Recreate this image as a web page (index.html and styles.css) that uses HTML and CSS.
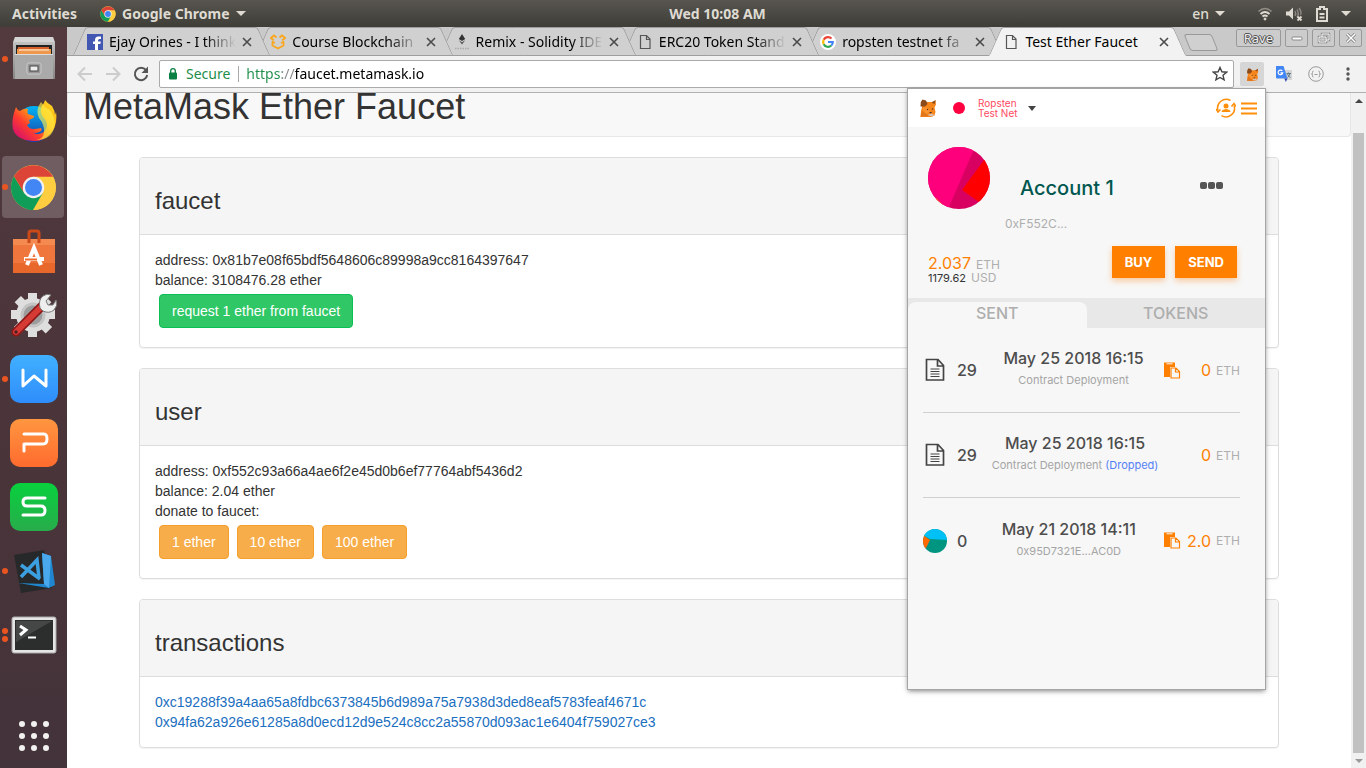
FILE: index.html
```html
<!DOCTYPE html>
<html lang="en">
<head>
<meta charset="utf-8">
<title>Test Ether Faucet</title>
<link rel="stylesheet" href="styles.css">
</head>
<body>
<svg class="defs" width="0" height="0" aria-hidden="true">
  <symbol id="chrome" viewBox="0 0 48 48">
    <circle cx="24" cy="24" r="23" fill="#fc4"/>
    <path d="M24 13H43.900A23 23 0 0 1 24 47L33.500 29.500Z" fill="#ffcd40"/>
    <path d="M4.100 12.500A23 23 0 0 0 23.500 47L33.500 29.500 14.500 29.500Z" fill="#0f9d58"/>
    <path d="M4.100 12.500A23 23 0 0 1 43.900 13H24L14.500 29.500Z" fill="#db4437"/>
    <circle cx="24" cy="24" r="11" fill="#f1f1f1"/><circle cx="24" cy="24" r="8.700" fill="#4285f4"/>
  </symbol>
  <symbol id="page" viewBox="0 0 16 16"><path d="M3.500 1.500h6l3.500 3.500v9.500h-9.500zM9.500 1.500v4h3.500" fill="none" stroke="#555" stroke-width="1.200"/></symbol>
  <symbol id="close" viewBox="0 0 10 10"><path d="M1 1l8 8M9 1l-8 8" stroke="#4a4a4a" stroke-width="1.600"/></symbol>
  <symbol id="fox" viewBox="0 0 18 18">
    <path d="M2 4 4 1l4 2h5l3.500-1.500.5 4-1.500 3 1 4.500-1 3.500-3 1.500H1.500L2 12 3 8z" fill="#f6851b"/>
    <path d="M3.500.5 7 1.500 8.500 5 6 7.500 1.500 7.500 1.800 3zM16.800 1 12.500 3.500l3 1.500z" fill="#8a4a1c"/>
    <path d="M1.500 17.500 3 12l4.500 3 2.500 2.500z" fill="#e2761b"/><path d="M3 9l4 6 4-2.500-3-4z" fill="#fb9431"/><path d="M8.500 16l4-1.500 3 1.500-3 1.500z" fill="#d7c1b3"/>
    <circle cx="8.500" cy="10.500" r=".7" fill="#4a3020"/><circle cx="13.500" cy="10" r=".7" fill="#4a3020"/><path d="M10 13h3l-1 1.500z" fill="#4a3020"/>
  </symbol>
  <symbol id="doc" viewBox="0 0 20 24"><path d="M1.500 1.500h11.500l5.500 6v14.500h-17zM12.500 1.500v6.500h6" fill="none" stroke="#444" stroke-width="1.700"/><path d="M5.500 11h9M5.500 13.500h9M5.500 16h9M5.500 18.500h9" stroke="#444" stroke-width="1.200"/></symbol>
  <symbol id="copy" viewBox="0 0 17 17"><path d="M0 .5h11v4.500H6v10H0z" fill="#ff8000"/><path d="M2.500 1.800h6" stroke="#f7f7f7" stroke-width="1"/><path d="M7 6h5l3.500 3.500v6.500H7zM11.500 6v4h4" fill="#f7f7f7" stroke="#ff8000" stroke-width="1.200"/></symbol>
</svg>

<header class="topbar">
  <nav class="topbar-left">
    <button class="bar-btn">Activities</button>
    <button class="bar-btn app-menu"><svg width="16" height="16"><use href="#chrome"/></svg>Google Chrome<i class="caret"></i></button>
  </nav>
  <button class="bar-btn clock">Wed 10:08 AM</button>
  <div class="topbar-right">
    <button class="bar-btn lang">en<i class="caret"></i></button>
    <button class="bar-btn status" aria-label="System">
      <svg width="16" height="16" viewBox="0 0 16 16" fill="none" stroke="#dfdbd2"><path d="M1.500 5.500Q8-.5 14.500 5.500" stroke="#918e87" stroke-width="1.500"/><path d="M3.500 8Q8 4 12.500 8M5.500 10.500Q8 8.500 10.500 10.500" stroke-width="1.800"/><circle cx="8" cy="13" r="1" fill="#dfdbd2"/></svg>
      <svg width="18" height="16" viewBox="0 0 18 16" fill="none"><path d="M1 5.500h3l4-4v12l-4-4h-3z" fill="#dfdbd2"/><path d="M10 5q1.500 2.500 0 5M12 3.500q2.500 4 0 8M14 2q3 4 1.500 7" stroke="#8d8a83" stroke-width="1.400"/><path d="M12.500 10.500l4 4M16.500 10.500l-4 4" stroke="#dfdbd2" stroke-width="1.800"/></svg>
      <svg width="14" height="18" viewBox="0 0 14 18" fill="none" stroke="#dfdbd2"><path d="M2 4h3V2h4v2h3v12H2z" stroke-width="2"/><path d="M4.500 9h5M4.500 12.500h5" stroke-width="1.800"/></svg>
      <i class="caret"></i>
    </button>
  </div>
</header>

<div class="desktop">
  <aside class="dock">
    <button class="app on" aria-label="Files"><svg width="44" height="46" viewBox="0 0 44 46">
      <defs><linearGradient id="gf" x2="0" y2="1"><stop stop-color="#c9c9c9"/><stop offset="1" stop-color="#858585"/></linearGradient></defs>
      <path d="M3 1h38l2 5v37H1V6z" fill="url(#gf)"/><path d="M3 1h38l1 5H2z" fill="#d5d5d5"/><path d="M4 9h36v9H4z" fill="#222"/><path d="M6 11h31v6H5z" fill="#d8602a"/><path d="M5 13h34v5H5z" fill="#f0974e"/><path d="M7 14h30" stroke="#fff0d8"/><path d="M3 18h38v25H3z" fill="#aaa"/><path d="M3 18.500h38" stroke="#ddd"/><rect x="15" y="27" width="14" height="11" rx="2" fill="#999" stroke="#ccc"/><rect x="18" y="30" width="8" height="5" fill="#eee" stroke="#444"/></svg></button>
    <button class="app" aria-label="Firefox"><svg width="46" height="46" viewBox="0 -3 46 46">
      <defs><linearGradient id="ff" x1="1" y1="0" x2="0" y2="1"><stop stop-color="#ffe226"/><stop offset=".4" stop-color="#ffa813"/><stop offset=".65" stop-color="#ff3c2e"/><stop offset="1" stop-color="#c60084"/></linearGradient><linearGradient id="fb" x2="0" y2="1"><stop stop-color="#00b3f4"/><stop offset="1" stop-color="#1b3ba8"/></linearGradient></defs>
      <circle cx="23" cy="21" r="18" fill="url(#fb)"/>
      <path d="M5 4q1 3 4 4 4-3 8-2-1 3 0 5l6 2q1 2-5 4l1 3-3 2q2 4 6 4t8-1q2 3-2 4-4 2-7 0 7 5 13-1 5-7-2-14-5-8 1-14l1-3q2 3 7 6 3 5 3 9l1-3q2 14-6 22-8 8-17 7Q5 37 2 26 0 17 5 4z" fill="url(#ff)"/><path d="M30-1q-6 8-2 16 6 7 5 15-1 6-8 7 17 0 19-16Q43 8 34 4z" fill="#fff044" opacity=".65"/></svg></button>
    <button class="app on active" aria-label="Chrome"><svg width="47" height="47"><use href="#chrome"/></svg></button>
    <button class="app" aria-label="Software"><svg width="42" height="44" viewBox="0 0 42 44">
      <rect y="10" width="42" height="34" fill="#ef763c"/><path d="M0 10h42v6H0z" fill="#f58a50"/><path d="M0 34h42v10H0z" fill="#e8672b"/><path d="M16 14V4q0-2 2-2h6q2 0 2 2v10" fill="none" stroke="#c94918" stroke-width="3"/><path d="M14 36l7-17 7 17M11 30h20" fill="none" stroke="#fff" stroke-width="4"/><path d="M12 30.500h12" stroke="#ef6a2c" stroke-width="2"/></svg></button>
    <button class="app" aria-label="Settings"><svg width="46" height="46" viewBox="0 0 46 46">
      <g fill="#dedede"><circle cx="22" cy="23" r="17"/><path d="M17 1h9v44h-9zM0 18h44v9H0z"/><path d="M17 1h9v44h-9zM0 18h44v9H0z" transform="rotate(45 22 23)"/></g><circle cx="22" cy="23" r="11" fill="#9c9c9c" stroke="#c4c4c4" stroke-width="3"/><path d="M5 40 31 14" stroke="#8d1717" stroke-width="9" stroke-linecap="round"/><path d="M5 40 30 15" stroke="#d63a34" stroke-width="6" stroke-linecap="round"/><circle cx="5" cy="40" r="1.700" fill="#4d2020"/><path d="M29 16q-2-8 3-12 4-3 8-1l-5 6 2 4 5 0 3-5q2 6-2 10-5 4-11 1z" fill="#eee" stroke="#777"/></svg></button>
    <button class="app on" aria-label="Writer"><svg class="tile blue" viewBox="0 0 48 48"><path d="M13 15v16L24 21l12 10V15" /></svg></button>
    <button class="app" aria-label="Presentation"><svg class="tile orange" viewBox="0 0 48 48"><path d="M14 15h20q3 0 3 5t-4 5H14v7"/></svg></button>
    <button class="app" aria-label="Spreadsheets"><svg class="tile green" viewBox="0 0 48 48"><path d="M35 15H17q-4 0-4 4t4 4h14q4 0 4 4.500t-4 4.500H13"/></svg></button>
    <button class="app on" aria-label="Visual Studio Code"><svg width="42" height="44" viewBox="0 0 42 44"><path d="M1 6 31 1l8 38-31 5z" fill="#27282a"/><path d="M29 4l9 3 4 29-6 3-31-5 26 1z" fill="#1f86cf"/><path d="M29 4l9 3-2 32-5-4z" fill="#4aa9ec"/><path d="M8 16l19 14M8 28l16-17 2 18" fill="none" stroke="#3c9fe0" stroke-width="3.500"/></svg></button>
    <button class="app two" aria-label="Terminal"><svg width="46" height="38" viewBox="0 0 46 38"><rect x="1" y="1" width="44" height="36" rx="2" fill="#e5e5e5" stroke="#aaa"/><rect x="4" y="4" width="38" height="30" fill="#2c2e2d"/><path d="M5 5h36L5 26z" fill="#454746"/><path d="M9 10l6 4-6 5" fill="none" stroke="#fff" stroke-width="3"/><path d="M17 21.500h8" stroke="#fff" stroke-width="2"/></svg></button>
    <button class="app grid" aria-label="Show Applications"><svg width="30" height="30" viewBox="0 0 30 30" fill="#f2f2f0"><circle cx="3" cy="3" r="3"/><circle cx="15" cy="3" r="3"/><circle cx="27" cy="3" r="3"/><circle cx="3" cy="15" r="3"/><circle cx="15" cy="15" r="3"/><circle cx="27" cy="15" r="3"/><circle cx="3" cy="27" r="3"/><circle cx="15" cy="27" r="3"/><circle cx="27" cy="27" r="3"/></svg></button>
  </aside>

  <div class="browser">
    <div class="tabstrip">
      <div class="tabs">
        <div class="tab"><svg class="fav" viewBox="0 0 16 16"><path d="M0 0h16v16H0z" fill="#4257b2"/><path d="M8 16V10H6V7.500h2V6q0-3.500 3.500-3.500H14V5h-1.500Q11 5 11 6.500v1h2.800l-.4 2.500H11v6z" fill="#fff"/></svg><span class="tab-title">Ejay Orines - I think</span><button class="x" aria-label="Close tab"><svg><use href="#close"/></svg></button></div>
        <div class="tab"><svg class="fav" viewBox="0 0 16 16" fill="none" stroke="#fba61c" stroke-width="1.800"><path d="M6.500 3.500 4 1.500.8 4l3 2.200M9.500 3.500 12 1.500 15.200 4l-3 2.200M2.500 7.500v4L8 14.500l5.500-3v-4M2 7.500l3 1.500M14 7.500l-3 1.500"/></svg><span class="tab-title">Course Blockchain</span><button class="x" aria-label="Close tab"><svg><use href="#close"/></svg></button></div>
        <div class="tab"><svg class="fav" viewBox="0 0 16 16"><path d="M8 0l3.200 5L8 7 4.800 5z" fill="#333"/><path d="M4.800 6.200 8 8.200l3.200-2L8 10.500z" fill="#555"/><path d="M1 14.500h14" stroke="#aaa" stroke-width="1.500" stroke-dasharray="1.500 1"/></svg><span class="tab-title">Remix - Solidity IDE</span><button class="x" aria-label="Close tab"><svg><use href="#close"/></svg></button></div>
        <div class="tab"><svg class="fav"><use href="#page"/></svg><span class="tab-title">ERC20 Token Stand</span><button class="x" aria-label="Close tab"><svg><use href="#close"/></svg></button></div>
        <div class="tab"><svg class="fav" viewBox="0 0 16 16"><circle cx="8" cy="8" r="8" fill="#fff"/><g fill="none" stroke-width="2.200"><path d="M11.500 4.500A4.800 4.800 0 0 0 3.700 5.800" stroke="#ea4335"/><path d="M3.700 5.800a4.800 4.800 0 0 0 0 4.400" stroke="#fbbc05"/><path d="M3.700 10.200a4.800 4.800 0 0 0 7.600 1.300" stroke="#34a853"/><path d="M11.300 11.500Q12.800 10.200 12.800 8H8" stroke="#4285f4"/></g></svg><span class="tab-title">ropsten testnet fa</span><button class="x" aria-label="Close tab"><svg><use href="#close"/></svg></button></div>
        <div class="tab current"><svg class="fav"><use href="#page"/></svg><span class="tab-title">Test Ether Faucet</span><button class="x" aria-label="Close tab"><svg><use href="#close"/></svg></button></div>
      </div>
      <button class="newtab" aria-label="New tab"></button>
      <div class="win">
        <button class="win-btn user">Rave</button>
        <button class="win-btn" aria-label="Minimize"><svg width="14" height="12" viewBox="0 0 14 12"><rect x="2" y="5" width="10" height="3" rx="1" fill="#fff" stroke="#888"/></svg></button>
        <button class="win-btn" aria-label="Restore"><svg width="14" height="12" viewBox="0 0 14 12" fill="none"><path d="M5 5V2h7v6H9M2 5h7v5H2z" stroke="#888" stroke-width="2.400"/><path d="M5 5V2h7v6H9M2 5h7v5H2z" stroke="#fff"/></svg></button>
        <button class="win-btn" aria-label="Close window"><svg width="14" height="12" viewBox="0 0 14 12"><path d="M3 2l8 8M11 2l-8 8" stroke="#777" stroke-width="3"/><path d="M3 2l8 8M11 2l-8 8" stroke="#fff" stroke-width="1.500"/></svg></button>
      </div>
    </div>

    <div class="toolbar">
      <button class="nav" aria-label="Back" disabled><svg width="16" height="16" viewBox="0 0 16 16"><path d="M15 8H2M8 1.500 1.500 8 8 14.500" fill="none" stroke="#ccc" stroke-width="2"/></svg></button>
      <button class="nav" aria-label="Forward" disabled><svg width="16" height="16" viewBox="0 0 16 16"><path d="M1 8h13M8 1.500 14.500 8 8 14.500" fill="none" stroke="#ccc" stroke-width="2"/></svg></button>
      <button class="nav" aria-label="Reload"><svg width="16" height="16" viewBox="0 0 16 16"><path d="M13 4.200A6.200 6.200 0 1 0 14.200 9" fill="none" stroke="#555" stroke-width="2"/><path d="M15 .5v6.500H8.500z" fill="#555"/></svg></button>
      <div class="omnibox">
        <svg width="10" height="12" viewBox="0 0 10 12"><rect x="1" y="4.500" width="8" height="7" rx="1" fill="#0b8043"/><path d="M2.700 5V3a2.300 2.300 0 0 1 4.600 0v2" fill="none" stroke="#0b8043" stroke-width="1.300"/></svg>
        <label for="url">Secure</label>
        <input id="url" class="url" type="text" value="https://faucet.metamask.io" spellcheck="false">
        <button class="star" aria-label="Bookmark"><svg width="16" height="16" viewBox="0 0 16 16"><path d="M8 1.500l1.900 4.300 4.700.4-3.600 3.100 1.100 4.600L8 11.500l-4.100 2.400L5 9.300 1.400 6.200l4.700-.4z" fill="none" stroke="#444" stroke-width="1.400"/></svg></button>
      </div>
      <button class="ext open" aria-label="MetaMask"><svg width="13" height="13"><use href="#fox"/></svg></button>
      <button class="ext" aria-label="Translate"><svg width="16" height="16" viewBox="0 0 16 16"><path d="M6 4h10v10H8z" fill="#d5d5d5"/><path d="M0 0h7.500l4 12.500H1q-1 0-1-1z" fill="#4285f4"/><path d="M8.500 12.500h3L9.800 16z" fill="#2a46a8"/><path d="M6.300 5A2.300 2.300 0 1 0 6.700 6.800H4.500" fill="none" stroke="#fff" stroke-width="1.200"/><path d="M10.500 7.500H15M12.500 6.500v1M14 7.500q-1 3-2.500 4M11.500 8q1 3 3 3.500" fill="none" stroke="#607d8b"/></svg></button>
      <button class="ext" aria-label="JSON viewer"><svg width="16" height="16" viewBox="0 0 16 16" fill="none" stroke="#999"><circle cx="8" cy="8" r="7.300"/><path d="M5.500 5q-1.200 0-1 1.500T3.500 8q1.200 0 1 1.500T5.500 11M10.500 5q1.200 0 1 1.500T12.500 8q-1.200 0-1 1.500T10.500 11M6.500 8.500h3"/></svg></button>
      <button class="ext" aria-label="Menu"><svg width="4" height="14" viewBox="0 0 4 14" fill="#555"><circle cx="2" cy="2" r="1.700"/><circle cx="2" cy="7" r="1.700"/><circle cx="2" cy="12" r="1.700"/></svg></button>
    </div>

    <div class="viewport">
      <main class="page">
        <header class="page-head"><h1>MetaMask Ether Faucet</h1></header>
        <div class="container">
          <section class="panel">
            <div class="panel-heading"><h3>faucet</h3></div>
            <div class="panel-body">
              <div>address: 0x81b7e08f65bdf5648606c89998a9cc8164397647</div>
              <div>balance: 3108476.28 ether</div>
              <div class="btns"><button class="btn success">request 1 ether from faucet</button></div>
            </div>
          </section>
          <section class="panel">
            <div class="panel-heading"><h3>user</h3></div>
            <div class="panel-body">
              <div>address: 0xf552c93a66a4ae6f2e45d0b6ef77764abf5436d2</div>
              <div>balance: 2.04 ether</div>
              <div>donate to faucet:</div>
              <div class="btns"><button class="btn warning">1 ether</button><button class="btn warning">10 ether</button><button class="btn warning">100 ether</button></div>
            </div>
          </section>
          <section class="panel">
            <div class="panel-heading"><h3>transactions</h3></div>
            <div class="panel-body">
              <div><a href="#tx1">0xc19288f39a4aa65a8fdbc6373845b6d989a75a7938d3ded8eaf5783feaf4671c</a></div>
              <div><a href="#tx2">0x94fa62a926e61285a8d0ecd12d9e524c8cc2a55870d093ac1e6404f759027ce3</a></div>
            </div>
          </section>
        </div>
      </main>
      <div class="scrollbar"><i class="arrow up"></i><i class="thumb"></i><i class="arrow down"></i></div>
    </div>
  </div>
</div>

<section class="popup">
  <header class="mm-head">
    <svg width="18" height="18"><use href="#fox"/></svg>
    <button class="network"><i class="net-dot"></i><span>Ropsten<br>Test Net</span><i class="caret"></i></button>
    <button class="mm-icon" aria-label="Switch account"><svg width="20" height="20" viewBox="0 0 20 20" fill="none" stroke="#ff8f0a" stroke-width="1.500"><path d="M14.500 2.500A8.600 8.600 0 0 0 2 12.500M5.500 17.700A8.600 8.600 0 0 0 18 7.500"/><path d="M0 11l2 3 2.500-2.500M15.500 8.500 18 5.500l2 3"/><circle cx="10" cy="8" r="2.500" fill="#ff8f0a" stroke="none"/><path d="M5.500 14q0-2.500 4.500-3 4.500.5 4.500 3z" fill="#ff8f0a" stroke="none"/></svg></button>
    <button class="mm-icon" aria-label="Menu"><svg width="16" height="13" viewBox="0 0 16 13"><path d="M0 1.500h16M0 6.500h16M0 11.500h16" stroke="#ff8f0a" stroke-width="2"/></svg></button>
  </header>
  <div class="account">
    <svg class="identicon" width="62" height="62" viewBox="0 0 62 62"><clipPath id="ic"><circle cx="31" cy="31" r="31"/></clipPath><g clip-path="url(#ic)"><path d="M0 0h62v62H0z" fill="#d80060"/><path d="M0 0h47L20 62H0z" fill="#ff007d"/><path d="M56 13 34 43l17 12 11-5V10z" fill="#f00"/><path d="M8 51l8 8-10 2z" fill="#f80"/></g></svg>
    <div class="who"><h2>Account 1</h2><span>0xF552C...</span></div>
    <button class="more" aria-label="Account options"><i></i><i></i><i></i></button>
  </div>
  <div class="funds">
    <div class="balance"><div class="eth"><b>2.037</b><span>ETH</span></div><div class="usd"><b>1179.62</b><span>USD</span></div></div>
    <button class="mm-btn">BUY</button><button class="mm-btn">SEND</button>
  </div>
  <div class="mm-tabs"><button class="sel">SENT</button><button>TOKENS</button></div>
  <ul class="txs">
    <li><svg class="tx-icon" width="20" height="24"><use href="#doc"/></svg><span class="nonce">29</span><div class="tx-main"><strong>May 25 2018 16:15</strong><small>Contract Deployment</small></div><button class="copy" aria-label="Copy"><svg width="17" height="17"><use href="#copy"/></svg></button><span class="amt">0</span><span class="unit">ETH</span></li>
    <li><svg class="tx-icon" width="20" height="24"><use href="#doc"/></svg><span class="nonce">29</span><div class="tx-main wide"><strong>May 25 2018 16:15</strong><small>Contract Deployment <em>(Dropped)</em></small></div><span class="amt">0</span><span class="unit">ETH</span></li>
    <li><svg class="tx-icon" width="24" height="24" viewBox="0 0 24 24"><clipPath id="ic2"><circle cx="12" cy="12" r="12"/></clipPath><g clip-path="url(#ic2)"><path d="M0 0h24v24H0z" fill="#009580"/><path d="M0 0h24v11L7 10 0 6z" fill="#00c0f5"/><path d="M0 6l7 5-4 8-3 1z" fill="#ff6a00"/></g></svg><span class="nonce">0</span><div class="tx-main"><strong>May 21 2018 14:11</strong><small>0x95D7321E...AC0D</small></div><button class="copy" aria-label="Copy"><svg width="17" height="17"><use href="#copy"/></svg></button><span class="amt">2.0</span><span class="unit">ETH</span></li>
  </ul>
</section>
</body>
</html>
```
FILE: styles.css
```css
* { box-sizing: border-box; }
body { margin: 0; height: 100vh; display: flex; flex-direction: column; position: relative; overflow: hidden; font-family: "Liberation Sans", Arial, sans-serif; font-size: 14px; color: #333; background: #fff; }
button { font: inherit; color: inherit; background: none; border: 0; padding: 0; cursor: pointer; }
svg { display: block; flex: none; }
.defs { position: absolute; }
.caret { display: block; border: 5px solid transparent; border-top-color: currentColor; border-bottom: 0; }

/* Desktop bar */
.topbar { flex: none; height: 27px; display: grid; grid-template-columns: 1fr auto 1fr; align-items: center; padding: 0 15px 0 12px; background: linear-gradient(#57554e, #3e3d38); color: #dfdbd2; font: bold 14px/20px "Noto Sans", sans-serif; }
.topbar-left, .topbar-right, .bar-btn { display: flex; align-items: center; }
.topbar-left { gap: 23px; }
.clock { margin-left: 72px; }
.app-menu, .lang { gap: 6px; }
.topbar-right { justify-content: flex-end; gap: 32px; }
.status { gap: 12px; }
.lang { font-weight: 500; }

.desktop { flex: 1; min-height: 0; display: flex; }

/* Dock */
.dock { flex: none; width: 67px; display: flex; flex-direction: column; align-items: center; background: linear-gradient(#523a3e, #493439 60%, #43333a); }
.app { flex: none; position: relative; width: 67px; height: 64px; display: flex; align-items: center; justify-content: center; }
.app.active::before { content: ""; position: absolute; inset: 1px 3px 1px 2px; border-radius: 4px; background: #705d62; }
.app svg { position: relative; }
.app.on::after, .app.two::after { content: ""; position: absolute; left: 2px; top: 29px; width: 6px; height: 6px; border-radius: 50%; background: #e95420; }
.app.two::after { top: 25px; box-shadow: 0 8px #e95420; }
.app.grid { margin-top: auto; }
.tile { width: 48px; height: 48px; border-radius: 10px; fill: none; stroke: #fff; stroke-width: 3; stroke-linecap: round; stroke-linejoin: round; }
.blue { background: linear-gradient(#41b0ff, #2f8dfb); }
.orange { background: linear-gradient(#ff9640, #ff6b2e); }
.green { background: linear-gradient(#08d13e, #28ac4b); }

/* Browser frame */
.browser { flex: 1; min-width: 0; display: flex; flex-direction: column; }
.tabstrip { flex: none; height: 29px; display: flex; background: #c9c9c9; padding: 0 4px 0 6px; border-bottom: 1px solid #9e9e9e; font: 14px/20px "Noto Sans", sans-serif; color: #000; }
.tabs { flex: 1; min-width: 0; display: flex; isolation: isolate; }
.tab { flex: 1 1 0; min-width: 0; height: 29px; position: relative; display: flex; align-items: center; gap: 6px; padding: 0 17px 0 14px; }
.tab + .tab { margin-left: -13px; }
.tab:nth-child(1) { z-index: 5; }
.tab:nth-child(2) { z-index: 4; }
.tab:nth-child(3) { z-index: 3; }
.tab:nth-child(4) { z-index: 2; }
.tab:nth-child(5) { z-index: 1; }
.tab.current { z-index: 6; }
.tab::before, .tab::after { content: ""; position: absolute; z-index: -1; top: 0; bottom: 0; background: #d0d0d0; border: 1px solid #9e9e9e; }
.tab::before { left: 6px; right: 50%; border-right: 0; transform: skewX(-24deg); border-top-left-radius: 3px; }
.tab::after { left: 40%; right: 6px; border-left: 0; transform: skewX(24deg); border-top-right-radius: 3px; }
.tab.current::before, .tab.current::after { background: #f2f2f2; border-bottom-color: #f2f2f2; }
.fav { width: 16px; height: 16px; }
.tab-title { flex: 1; min-width: 0; overflow: hidden; white-space: nowrap; -webkit-mask-image: linear-gradient(90deg, #000 75%, transparent 100%); mask-image: linear-gradient(90deg, #000 75%, transparent 100%); }
.current .tab-title { -webkit-mask-image: none; mask-image: none; }
.x { width: 10px; height: 10px; }
.x svg { width: 10px; height: 10px; }
.newtab { flex: none; width: 28px; height: 17px; margin: 7px 21px 0 1px; border: 1px solid #999; border-radius: 3px; background: #d0d0d0; transform: skewX(22deg); }
.win { display: flex; gap: 4px; padding-top: 2px; }
.win-btn { min-width: 23px; height: 18px; display: flex; align-items: center; justify-content: center; border: 1px solid #999; border-radius: 2px; background: #ccc; }
.win-btn.user { padding: 0 7px; color: #eee; font: 13px/16px "Noto Sans", sans-serif; text-shadow: 1px 0 #555, -1px 0 #555, 0 1px #555, 0 -1px #555; }

.toolbar { flex: none; height: 37px; display: flex; align-items: center; padding: 0 6px 0 10px; background: #f2f2f2; border-bottom: 1px solid #b0b0b0; font: 14px/20px "Noto Sans", sans-serif; }
.nav { width: 16px; margin-right: 12px; }
.nav:nth-child(3) { margin-right: 10px; }
.omnibox { flex: 1; min-width: 0; height: 28px; display: flex; align-items: center; padding: 0 5px 0 8px; border: 1px solid #aaa; border-radius: 2px; background: #fff; }
.omnibox label { margin-left: 8px; color: #1e8e4a; padding-right: 8px; border-right: 1px solid #aaa; line-height: 16px; }
.url { flex: 1; min-width: 0; margin-left: 7px; border: 0; padding: 0; outline: 0; font: inherit; color: transparent; background: linear-gradient(90deg, #1e8e4a 36px, #888 36px 49px, #000 49px); -webkit-background-clip: text; background-clip: text; }
.ext { width: 24px; height: 24px; margin-left: 8px; display: flex; align-items: center; justify-content: center; border-radius: 2px; }
.ext.open { margin-left: 6px; background: #d6d6d6; }

/* Web page */
.viewport { flex: 1; min-height: 0; display: flex; }
.page { flex: 1; min-width: 0; overflow: hidden; line-height: 20px; }
.page-head { height: 44px; margin: 0 0 20px; padding: 0 15px 9px; display: flex; align-items: flex-end; overflow: hidden; border: 1px solid #e7e7e7; border-top: 0; border-radius: 0 0 4px 4px; background: #f8f8f8; }
h1 { margin: 0; font-size: 36px; line-height: 40px; }
h1, h3 { font-weight: normal; }
.container { max-width: 1170px; margin: 0 auto; padding: 0 15px; }
.panel { margin-bottom: 20px; border: 1px solid #ddd; border-radius: 4px; box-shadow: 0 1px 1px rgba(0,0,0,.05); }
.panel-heading { padding: 10px 15px; background: #f5f5f5; border-bottom: 1px solid #ddd; border-radius: 3px 3px 0 0; }
h3 { margin: 20px 0 10px; font-size: 24px; line-height: 26px; }
.panel-body { padding: 15px; }
.btns { display: flex; gap: 8px; padding: 4px; }
.btn { height: 34px; padding: 0 12px; border: 1px solid; border-radius: 4px; color: #fff; }
.success { background: #30c766; border-color: #0bbf56; }
.warning { background: #f7ad49; border-color: #f5a02c; }
a { color: #1b6fbf; text-decoration: none; }
.scrollbar { flex: none; width: 15px; display: flex; flex-direction: column; align-items: center; padding: 6px 0 5px; background: #f1f1f1; }
.thumb { width: 11px; margin: 30px 0 6px; flex: 1; background: #c1c1c1; }
.arrow { border: 4px solid transparent; }
.up { border-top: 0; border-bottom-color: #444; }
.down { border-bottom: 0; border-top-color: #999; }

/* Wallet popup */
.popup { position: absolute; top: 89px; right: 101px; width: 357px; height: 600px; background: #f7f7f7; box-shadow: 0 0 0 1px #a5a5a5, 0 2px 5px rgba(0,0,0,.5); font-family: Inter, sans-serif; color: #4d4d4d; }
.mm-head { height: 38px; display: flex; align-items: center; padding: 0 8px 0 11px; background: #fff; }
.network { display: flex; align-items: center; margin: 0 auto 0 16px; color: #ff4a5f; font-size: 10px; line-height: 10px; text-align: left; }
.net-dot { width: 12px; height: 12px; margin-right: 13px; border-radius: 50%; background: #ff0040; }
.network .caret { margin-left: 10px; color: #444; border-width: 5px 4px 0; }
.mm-icon { margin-left: 5px; }
.account { display: flex; align-items: flex-start; padding: 20px 42px 0 20px; }
.who { flex: 1; padding: 29px 0 0 15px; }
.who h2 { margin: 0 0 14px 15px; font-size: 20px; line-height: 24px; font-weight: 500; color: #00574f; }
.who span { display: block; font-size: 12px; line-height: 20px; color: #aeaeae; }
.more { display: flex; gap: 1px; margin-top: 35px; }
.more i { width: 7px; height: 7px; border-radius: 2px; background: #555; }
.funds { display: flex; gap: 10px; padding: 12px 28px 15px 20px; }
.balance { flex: 1; padding-top: 9px; }
.balance b { font-weight: 400; }
.eth, .usd { display: flex; align-items: baseline; color: #aeaeae; font-size: 12px; gap: 5px; }
.eth { line-height: 16px; }
.usd { line-height: 9px; }
.eth b { font-size: 16px; color: #ff8000; }
.usd b { font-size: 11px; color: #333; }
.mm-btn { height: 32px; padding: 0 13px; background: #ff8000; color: #fff; font-size: 13px; font-weight: 700; box-shadow: 0 3px 6px rgba(247,134,28,.4); }
.mm-tabs { height: 30px; display: flex; align-items: flex-end; background: #e8e8e8; }
.mm-tabs button { flex: 1; height: 26px; padding-bottom: 5px; color: #aeaeae; font-size: 16px; font-weight: 500; }
.mm-tabs .sel { background: #f7f7f7; border-radius: 8px 8px 0 0; }
.txs { list-style: none; margin: 0; padding: 0 25px 0 15px; }
.txs li { height: 85px; display: flex; align-items: center; border-bottom: 1px solid #d0d0d0; }
.txs li:last-child { border: 0; }
.tx-icon { width: 24px; }
.nonce { margin: 0 6px 0 10px; font-size: 16px; font-weight: 500; }
.tx-main { flex: 1; display: flex; flex-direction: column; align-items: center; gap: 6px; padding-bottom: 6px; }
.tx-main strong { font-size: 16px; line-height: 20px; font-weight: 500; white-space: nowrap; }
.tx-main small { font-size: 11px; line-height: 12px; color: #a5a5a5; white-space: nowrap; }
.tx-main em { font-style: normal; color: #5580f5; }
.tx-main.wide { padding-right: 14px; }
.amt { min-width: 30px; text-align: right; font-size: 16px; color: #ff8000; }
.unit { margin-left: 5px; font-size: 12px; color: #aeaeae; }
```
